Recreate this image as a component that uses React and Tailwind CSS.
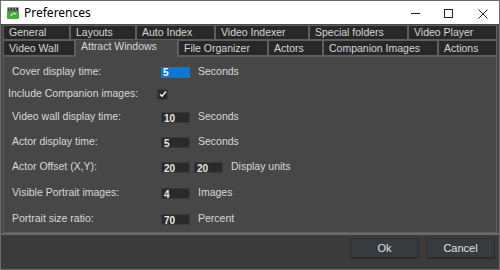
import React from "react";

const font = { fontFamily: '"Liberation Sans", Arial, sans-serif' };

function Tab({ w, label }) {
  return (
    <div
      className={`${w} h-full border border-[#5e5e5e] bg-[#282828] pl-[5px] text-[10.5px] leading-[13px] text-[#d6d6d6] whitespace-nowrap overflow-hidden`}
    >
      {label}
    </div>
  );
}

function Input({ value, active }) {
  return (
    <div
      className={`w-[29px] h-[11px] ${active ? "bg-[#0a78d7] text-white" : "bg-[#2a2a2a] text-[#e8e8e8] border border-[#3a3a3a]"} pl-[2px] text-[10px] leading-[11px] font-bold`}
    >
      {value}
    </div>
  );
}

function Row({ mt, label, labelPad = "pl-[8px]", children }) {
  return (
    <div className={`flex items-center h-[12px] ${mt}`}>
      <div className={`w-[157px] ${labelPad} text-[10.5px] text-[#d8d8d8] whitespace-nowrap`}>{label}</div>
      {children}
    </div>
  );
}

function Unit({ children }) {
  return <div className="ml-[8px] text-[10.5px] text-[#d8d8d8]">{children}</div>;
}

export default function App() {
  return (
    <div style={font} className="w-[500px] h-[270px] bg-[#474747] flex flex-col border border-[#6c6c6c] overflow-hidden">
      {/* Title bar */}
      <div className="h-[23px] bg-white flex items-center shrink-0 relative">
        <svg className="ml-[6px]" width="12" height="12" viewBox="0 0 12 12">
          <rect x="0.5" y="0.5" width="11" height="3.5" fill="#3b3b3b" />
          <path d="M2 0.5 L3.5 4 M5 0.5 L6.5 4 M8 0.5 L9.5 4" stroke="#9a9a9a" strokeWidth="1" />
          <rect x="0.5" y="4" width="11" height="7.5" fill="#3fae3c" />
          <rect x="0.5" y="4" width="11" height="7.5" fill="none" stroke="#2a7a2a" strokeWidth="0.6" />
          <path d="M4 9 Q6 5 9 7" stroke="#d7f2c8" strokeWidth="1.2" fill="none" />
        </svg>
        <div className="ml-[5px] text-[12px] text-black" style={{ fontFamily: '"Noto Sans", "Open Sans", sans-serif' }}>Preferences</div>
        <div className="absolute left-[410px] top-[12px] w-[9px] h-px bg-[#222]" />
        <div className="absolute left-[443px] top-[8px] w-[9px] h-[9px] border border-[#222]" />
        <svg className="absolute left-[477px] top-[8px]" width="10" height="10" viewBox="0 0 10 10">
          <path d="M0.5 0.5 L9.5 9.5 M9.5 0.5 L0.5 9.5" stroke="#222" strokeWidth="1" />
        </svg>
      </div>

      {/* Tabs */}
      <div className="pt-[1px] pl-[2px] shrink-0">
        <div className="flex h-[15px]">
          <Tab w="w-[67px]" label="General" />
          <Tab w="w-[66px]" label="Layouts" />
          <Tab w="w-[79px]" label="Auto Index" />
          <Tab w="w-[94px]" label="Video Indexer" />
          <Tab w="w-[99px]" label="Special folders" />
          <Tab w="w-[89px]" label="Video Player" />
        </div>
        <div className="flex h-[16px] items-end">
          <div className="w-[72px] h-[16px] border border-[#5e5e5e] bg-[#282828] pl-[5px] text-[10.5px] leading-[14px] text-[#d6d6d6]">Video Wall</div>
          <div className="w-[103px] h-[18px] -mt-[2px] border border-b-0 border-[#5e5e5e] bg-[#474747] pl-[5px] text-[10.5px] leading-[13px] text-[#d6d6d6] relative z-10 mb-[-1px]">Attract Windows</div>
          <div className="w-[90px] h-[16px] border border-[#5e5e5e] bg-[#282828] pl-[5px] text-[10.5px] leading-[14px] text-[#d6d6d6]">File Organizer</div>
          <div className="w-[55px] h-[16px] border border-[#5e5e5e] bg-[#282828] pl-[5px] text-[10.5px] leading-[14px] text-[#d6d6d6]">Actors</div>
          <div className="w-[115px] h-[16px] border border-[#5e5e5e] bg-[#282828] pl-[5px] text-[10.5px] leading-[14px] text-[#d6d6d6]">Companion Images</div>
          <div className="w-[59px] h-[16px] border border-[#5e5e5e] bg-[#282828] pl-[5px] text-[10.5px] leading-[14px] text-[#d6d6d6]">Actions</div>
        </div>
      </div>

      {/* Panel */}
      <div className="mx-[2px] h-[177px] border border-[#5e5e5e] bg-[#474747] shrink-0 flex flex-col">
        <Row mt="mt-[9px]" label="Cover display time:">
          <Input value="5" active />
          <Unit>Seconds</Unit>
        </Row>
        <Row mt="mt-[10px]" label="Include Companion images:" labelPad="pl-[4px]">
          <div className="ml-[-4px] w-[11px] h-[11px] bg-[#2a2a2a] border border-[#3c3c3c] flex items-center justify-center">
            <svg width="8" height="8" viewBox="0 0 8 8">
              <path d="M1 4.2 L3 6.2 L7 1.5" stroke="#f2f2f2" strokeWidth="1.5" fill="none" />
            </svg>
          </div>
        </Row>
        <Row mt="mt-[11px]" label="Video wall display time:">
          <Input value="10" />
          <Unit>Seconds</Unit>
        </Row>
        <Row mt="mt-[13px]" label="Actor display time:">
          <Input value="5" />
          <Unit>Seconds</Unit>
        </Row>
        <Row mt="mt-[13px]" label="Actor Offset (X,Y):">
          <Input value="20" />
          <div className="ml-[4px]"><Input value="20" /></div>
          <Unit>Display units</Unit>
        </Row>
        <Row mt="mt-[14px]" label="Visible Portrait images:">
          <Input value="4" />
          <Unit>Images</Unit>
        </Row>
        <Row mt="mt-[14px]" label="Portrait size ratio:">
          <Input value="70" />
          <Unit>Percent</Unit>
        </Row>
      </div>

      {/* Footer */}
      <div className="flex-1 border-t-2 border-[#6a6a6a] bg-[#3b3b3b] flex items-start justify-end pr-[4px] pt-[3px] gap-[7px]">
        <button className="w-[69px] h-[20px] rounded-[2px] bg-[#373b3d] border border-[#2c2f31] text-[11px] text-[#e2e2e2] shadow-[0_1px_0_#2a2a2a]">Ok</button>
        <button className="w-[69px] h-[20px] rounded-[2px] bg-[#373b3d] border border-[#2c2f31] text-[11px] text-[#e2e2e2] shadow-[0_1px_0_#2a2a2a]">Cancel</button>
      </div>
    </div>
  );
}
